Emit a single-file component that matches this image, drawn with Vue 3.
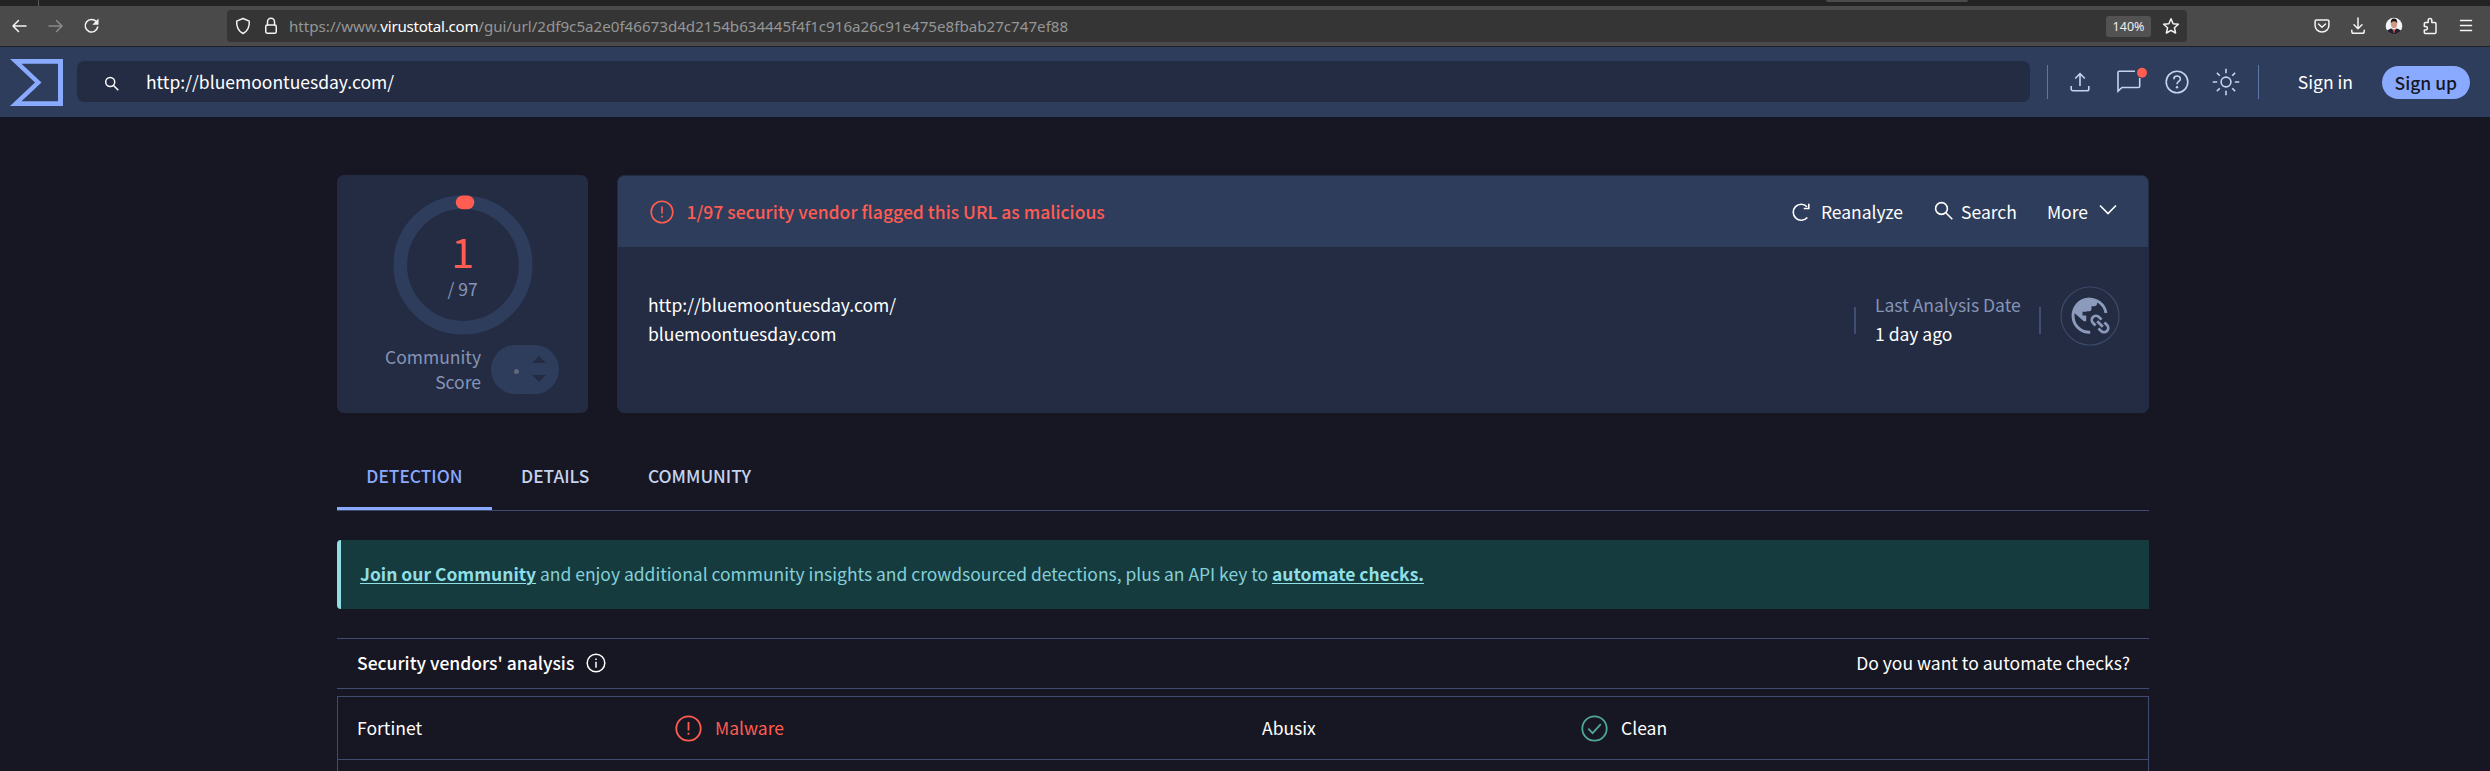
<script setup>
const vendors = [
  { name: 'Fortinet', verdict: 'Malware', bad: true },
  { name: 'Abusix', verdict: 'Clean', bad: false },
]
const tabs = ['DETECTION', 'DETAILS', 'COMMUNITY']
</script>

<template>
  <div class="page">
    <div class="tabstrip"><span class="split"></span><span class="hovered"></span></div>

    <div class="toolbar">
      <div class="nav">
        <svg width="18" height="18" viewBox="0 0 18 18"><path d="M16 9H3M8.500 3.500L3 9l5.500 5.500" /></svg>
        <svg class="dim" width="18" height="18" viewBox="0 0 18 18"><path d="M3 9h13M10.500 3.500L16 9l-5.500 5.500" /></svg>
        <svg width="18" height="18" viewBox="0 0 18 18"><path d="M14.300 4.600A6.300 6.300 0 1 0 15.700 10" /><path class="solid" d="M16.500 1.500v6.200h-6.200z" /></svg>
      </div>
      <div class="urlbar">
        <svg class="shield" width="18" height="18" viewBox="0 0 18 18"><path d="M9 1.500l6.300 2.600c.3 5.400-1.500 10-6.300 12.400C4.200 14.100 2.400 9.500 2.700 4.100z" /></svg>
        <svg class="lock" width="14" height="18" viewBox="0 0 14 18"><rect x="1.750" y="8" width="10.500" height="8.250" rx="1.500" /><path d="M3.500 8V4.800a3.500 3.500 0 0 1 7 0V8" /></svg>
        <div class="url">https://www.<b>virustotal.com</b>/gui/url/2df9c5a2e0f46673d4d2154b634445f4f1c916a26c91e475e8fbab27c747ef88</div>
        <span class="zoom">140%</span>
        <svg class="star" width="18" height="18" viewBox="0 0 18 18"><path d="M9 1.800l2.100 4.900 5.300.5-4 3.500 1.200 5.300L9 13.300 4.400 16l1.200-5.300-4-3.500 5.300-.5z" /></svg>
      </div>
      <div class="tools">
        <svg width="18" height="18" viewBox="0 0 18 18"><path d="M3.300 3h11.400a1.200 1.200 0 0 1 1.200 1.200V8.500A6.900 6.500 0 0 1 2.100 8.500V4.200A1.200 1.200 0 0 1 3.300 3z" /><path d="M5.500 7L9 10.300 12.500 7" /></svg>
        <svg width="18" height="18" viewBox="0 0 18 18"><path d="M9 1v10.500M5 7.800l4 4 4-4M2.800 13.200v1.300a1.800 1.800 0 0 0 1.800 1.800h8.800a1.800 1.800 0 0 0 1.800-1.800v-1.300" /></svg>
        <svg width="18" height="18" viewBox="0 0 18 18">
          <circle class="a-bg" cx="9" cy="9" r="8.300" />
          <path class="a-suit" d="M2 13.500Q5 11.300 9 11.300t7 2.200A8.300 8.300 0 0 1 2 13.500z" />
          <path class="a-shirt" d="M7 11l2 4.500 2-4.500z" /><path class="a-tie" d="M8.500 12h1l.5 3-1 1.500-1-1.500z" />
          <ellipse class="a-skin" cx="9" cy="7.300" rx="3" ry="4" /><path class="a-hair" d="M5.800 6.500Q5.500 1.500 9 1.500t3.200 5Q11.500 4.300 9 4.300T5.800 6.500z" />
        </svg>
        <svg width="18" height="18" viewBox="0 0 18 18"><path d="M3.300 8V6.800A1.300 1.300 0 0 1 4.600 5.500H7.200V3.200a1.800 1.800 0 0 1 3.600 0v2.300h2.900A1.300 1.300 0 0 1 15 6.800v8.500a1.300 1.300 0 0 1-1.300 1.300H4.600a1.300 1.300 0 0 1-1.300-1.300v-2.200h1.300a1.800 1.800 0 0 0 0-3.600H3.300z" /></svg>
        <svg width="18" height="18" viewBox="0 0 18 18"><path d="M3.500 3.500h11M3.500 8.500h11M3.500 13.500h11" /></svg>
      </div>
    </div>

    <header class="header">
      <svg class="logo" width="53" height="47" viewBox="0 0 53 47"><path d="M0 0h53v47H0l25-23.500zM11.500 4.800l20 18.700-20 18.700H48V4.800z" fill-rule="evenodd" /></svg>
      <div class="search">
        <svg width="16" height="16" viewBox="0 0 16 16"><circle cx="6.200" cy="6" r="4.500" /><path d="M9.500 9.500l4.800 4.800" /></svg>
        <span>http://bluemoontuesday.com/</span>
      </div>
      <i class="rule"></i>
      <div class="icons">
        <svg width="28" height="28" viewBox="0 0 28 28"><path d="M14 18V6M9.200 10.500L14 5.700l4.800 4.800M5.200 18v3a1.800 1.800 0 0 0 1.800 1.800h14a1.800 1.800 0 0 0 1.800-1.800v-3" /></svg>
        <svg width="28" height="28" viewBox="0 0 28 28"><path d="M20 3.300H4.300A1.300 1.300 0 0 0 3 4.600v18.500l4-3.600h16.400a1.300 1.300 0 0 0 1.300-1.300V10" /><circle class="dot" cx="27" cy="4.700" r="5" /></svg>
        <svg width="28" height="28" viewBox="0 0 28 28"><circle cx="14" cy="14" r="10.800" /><path d="M10.800 11.200c0-4.300 6.500-4.300 6.500-.3 0 2.600-3.300 2.600-3.300 5.300" /><circle class="fill" cx="14" cy="19.300" r="1.200" /></svg>
        <svg width="28" height="28" viewBox="0 0 28 28"><circle cx="14" cy="14" r="4.900" /><path d="M14 .7v4.500M14 22.800v4.500M.7 14h4.500M22.800 14h4.500M4.900 4.900l2.900 2.900M20.200 20.200l2.900 2.900M4.900 23.100l2.900-2.900M20.200 7.800l2.900-2.900" /></svg>
      </div>
      <i class="rule"></i>
      <span class="signin">Sign in</span>
      <span class="signup">Sign up</span>
    </header>

    <main class="main">
      <section class="summary">
        <div class="score">
          <div class="ring">
            <svg class="circle" width="140" height="140" viewBox="0 0 140 140">
              <circle class="track" cx="70" cy="70" r="62.700" />
              <path class="hit" d="M69.700 7.300h4.700" />
            </svg>
            <div class="num">1</div>
            <div class="total">/ 97</div>
          </div>
          <div class="community">
            <div class="label">Community<br />Score</div>
            <div class="pill">
              <i class="pip"></i>
              <svg width="14" height="26" viewBox="0 0 14 26"><path d="M0 7L7 0l7 7zM0 19h14l-7 7z" /></svg>
            </div>
          </div>
        </div>

        <div class="info">
          <div class="flag">
            <svg class="warn" width="24" height="24" viewBox="0 0 24 24"><circle cx="12" cy="12" r="10.800" /><path d="M12 6.500v7" /><path d="M12 15.800v1.600" /></svg>
            <span class="alert">1/97 security vendor flagged this URL as malicious</span>
            <span class="action reanalyze">
              <svg width="20" height="20" viewBox="0 0 20 20"><path d="M16.300 15.500A8 8 0 1 1 16 4.700" /><path d="M17.800 1.800v4.700h-5" /></svg>Reanalyze
            </span>
            <span class="action find">
              <svg width="20" height="20" viewBox="0 0 20 20"><circle cx="7.500" cy="7.500" r="5.900" /><path d="M11.800 11.800l6.500 6.500" /></svg>Search
            </span>
            <span class="action more">More<svg width="18" height="12" viewBox="0 0 18 12"><path d="M1 1.500l8 8 8-8" /></svg></span>
          </div>
          <div class="details">
            <div class="lines">http://bluemoontuesday.com/<br />bluemoontuesday.com</div>
            <i class="bar"></i>
            <div class="lines date"><em>Last Analysis Date</em><br />1 day ago</div>
            <i class="bar"></i>
            <svg class="globe" width="60" height="60" viewBox="0 0 60 60">
              <circle class="rim" cx="30" cy="30" r="29" />
              <path class="arc" d="M30.200 46.300A16.600 16.600 0 1 1 46 26.900" />
              <path class="land" d="M13 25.800Q16 12 30 11.800L37 14.800V17.500q0 2.800-2.800 2.800H31.500v2.700q0 2.200-2.200 2.200h-2.800v.6h-4v3.700h3.700v5.700h-2.400z" />
              <g class="chain" transform="rotate(45 40 38)"><path d="M38 42.200h-3.700a4.200 4.200 0 0 1 0-8.400H38M42 33.800h3.700a4.200 4.200 0 0 1 0 8.400H42M36 38h8" /></g>
            </svg>
          </div>
        </div>
      </section>

      <nav class="tabs">
        <span v-for="(t, i) in tabs" :key="t" :class="{ active: i === 0 }">{{ t }}</span>
      </nav>

      <div class="banner"><b>Join our Community</b> and enjoy additional community insights and crowdsourced detections, plus an API key to <b>automate checks.</b></div>

      <div class="heading">
        <strong>Security vendors' analysis</strong>
        <svg width="20" height="20" viewBox="0 0 20 20"><circle cx="10" cy="10" r="8.800" /><path d="M10 8.800v6M10 5.500v1.600" /></svg>
        <span>Do you want to automate checks?</span>
      </div>

      <div class="table">
        <div class="row">
          <template v-for="v in vendors" :key="v.name">
            <span>{{ v.name }}</span>
            <span class="verdict" :class="v.bad ? 'bad' : 'ok'">
              <svg width="27" height="27" viewBox="0 0 27 27">
                <circle cx="13.500" cy="13.500" r="12.200" />
                <path v-if="v.bad" d="M13.500 7v8.500M13.500 17.700v2" />
                <path v-else d="M7.300 13.700l4.300 4.500 8.200-9" />
              </svg>{{ v.verdict }}
            </span>
          </template>
        </div>
        <div class="row"></div>
      </div>
    </main>
  </div>
</template>

<style>
html, body { margin: 0; background: #171723; overflow: hidden; }
</style>

<style scoped>
.page { width: 2490px; height: 771px; overflow: hidden; background: #171723; color: #fff; font: 17.5px/24px "Noto Sans CJK SC", sans-serif; white-space: nowrap; }
svg { display: block; flex: none; fill: none; overflow: visible; }
b, strong { font-weight: 500; }
em { font-style: normal; }
i { display: block; flex: none; }

.tabstrip { height: 6px; background: #232323; display: flex; }
.split { width: 1px; margin-left: 38px; background: #5a5a5a; }
.hovered { width: 142px; height: 2px; margin-left: 1787px; background: #4b4b4b; border-radius: 0 0 3px 3px; }

.toolbar { height: 40px; background: #4a4a4a; border-bottom: 1px solid #202124; display: flex; align-items: center; }
.toolbar svg { stroke: #f4f4f4; stroke-width: 1.5; stroke-linecap: round; stroke-linejoin: round; }
.nav { display: flex; gap: 18px; margin-left: 10px; width: 217px; }
.toolbar .nav .dim { stroke: #8b8b8b; }
.toolbar .solid { fill: #f4f4f4; stroke: none; }
.urlbar { width: 1960px; height: 32px; border-radius: 4px; background: #353535; display: flex; align-items: center; font: 15.15px/32px "Noto Sans", sans-serif; color: #959595; }
.shield { margin-left: 7px; }
.lock { margin-left: 12px; }
.url { margin-left: 11px; flex: 1; }
.url b { font-weight: 400; color: #fff; letter-spacing: -.26px; }
.zoom { width: 45px; height: 21px; line-height: 21px; border-radius: 3px; background: #525252; color: #eee; font-size: 12.500px; text-align: center; margin-right: 11px; }
.star { margin-right: 7px; }
.tools { display: flex; gap: 18px; margin-left: 126px; }
.toolbar .a-bg { fill: #f1f3f6; stroke: none; }
.a-suit { fill: #20232d; stroke: none; }
.a-shirt { fill: #fff; stroke: none; }
.a-tie { fill: #c42b34; stroke: none; }
.a-skin { fill: #cf9880; stroke: none; }
.a-hair { fill: #171313; stroke: none; }

.header { height: 70px; background: #2e3d5c; display: flex; align-items: center; }
.logo { fill: #89aaff; margin-left: 10px; }
.search { width: 1953px; height: 41px; margin-left: 14px; margin-top: -1px; border-radius: 7px; background: #242c43; display: flex; align-items: center; }
.search svg { margin: 4px 26px 0 27px; stroke: #fff; stroke-width: 1.5; }
.rule { width: 1px; height: 34px; background: #6076a8; }
.header .search + .rule { margin-left: 17px; }
.icons { display: flex; gap: 20.600px; margin: 0 18px 0 18px; }
.icons svg { stroke: #c5d3ed; stroke-width: 1.6; }
.icons .dot { fill: #ff5c52; stroke: none; }
.icons .fill { fill: #c5d3ed; stroke: none; }
.signin { margin-left: 39px; width: 84px; }
.signup { width: 88px; height: 33px; line-height: 33px; border-radius: 17px; background: #89aaff; color: #171723; font-weight: 500; text-align: center; }

.main { width: 1812px; margin-left: 337px; padding-top: 58px; }
.summary { display: flex; gap: 29px; height: 238px; }
.score { width: 251px; border-radius: 7px; background: #242c43; color: #8694b6; display: flex; flex-direction: column; }
.ring { width: 140px; height: 140px; margin: 19.500px 0 0 55.700px; text-align: center; display: flex; flex-direction: column; }
.circle { margin-bottom: -140px; }
.track { stroke: #2e3d5c; stroke-width: 13.600; }
.hit { stroke: #ff5c52; stroke-width: 13.800; stroke-linecap: round; }
.num { font-size: 41px; line-height: 50px; color: #ff5c52; margin-top: 30.500px; }
.total { line-height: 24px; margin-top: 2px; }
.community { display: flex; align-items: center; margin: 9.500px 0 0 48px; }
.label { width: 96px; line-height: 25px; text-align: right; }
.pill { width: 68px; height: 49px; margin-left: 10px; border-radius: 24.500px; background: #2e3d5c; display: flex; align-items: center; }
.pip { width: 5px; height: 5px; border-radius: 50%; background: #5f6778; margin: 4px 13px 0 23px; }
.pill svg { fill: #242c43; }

.info { flex: 1; box-sizing: border-box; border: 1px solid #242c43; border-radius: 7px; background: #242c43; overflow: hidden; }
.flag { height: 71px; background: #2e3d5c; display: flex; align-items: center; }
.flag svg { stroke: #fff; stroke-width: 1.6; }
.flag .warn { margin-left: 31.500px; stroke: #ff5c52; }
.alert { margin-left: 13px; flex: 1; color: #ff5c52; font-weight: 500; letter-spacing: .02px; }
.action { display: flex; align-items: center; }
.reanalyze svg { margin-right: 10px; }
.find { margin-left: 31px; }
.find svg { margin-right: 7px; margin-top: -2px; }
.more { margin-left: 30px; margin-right: 31.500px; }
.more svg { margin-left: 10.500px; margin-top: -3px; }
.details { display: flex; height: 137px; align-items: center; }
.lines { line-height: 29px; margin: 6px 0 0 30px; flex: 1; }
.date { flex: none; margin-left: 19px; width: 164px; }
.date em { color: #8694b6; }
.bar { width: 2px; height: 27px; margin-top: 9px; background: #3f4e71; }
.globe { margin-left: 19px; margin-right: 28px; }
.rim { stroke: #3b4968; stroke-width: 1.2; }
.arc { stroke: #8c9bbc; stroke-width: 2.9; }
.land { fill: #8c9bbc; }
.chain { stroke: #8c9bbc; stroke-width: 2.7; }

.tabs { height: 97px; border-bottom: 1px solid #3d4c70; display: flex; }
.tabs span { box-sizing: border-box; padding: 51px 29.300px 0; font-size: 17.350px; font-weight: 500; color: #c5d3ed; }
.tabs .active { color: #89aaff; border-bottom: 3px solid #89aaff; }
.banner { box-sizing: border-box; height: 69px; margin-top: 29px; padding-left: 19px; border-left: 4px solid #8fdfe5; border-radius: 4px 0 0 4px; background: #163b3f; color: #84d0d8; font-size: 17.480px; line-height: 68px; }
.banner b { font-weight: 700; color: #8fdfe5; text-decoration: underline; text-decoration-thickness: 1px; text-underline-offset: 2px; }
.heading { box-sizing: border-box; height: 51px; margin-top: 29px; padding: 0 19px 1px 20px; border: solid #3d4c70; border-width: 1px 0; display: flex; align-items: center; }
.heading svg { margin-left: 12px; stroke: #fff; stroke-width: 1.5; }
.heading span { margin-left: auto; }
.table { margin-top: 7px; border: solid #3d4c70; border-width: 1px 1px 0; }
.row { height: 62px; padding-left: 19px; border-bottom: 1px solid #3d4c70; display: grid; grid-template-columns: 318px 587px 319px 1fr; align-items: center; }
.verdict { display: flex; align-items: center; }
.verdict svg { margin-right: 13px; stroke-width: 1.8; stroke: #4fa795; }
.bad { color: #ff5c52; }
.bad svg { stroke: #ff5c52; }
</style>
